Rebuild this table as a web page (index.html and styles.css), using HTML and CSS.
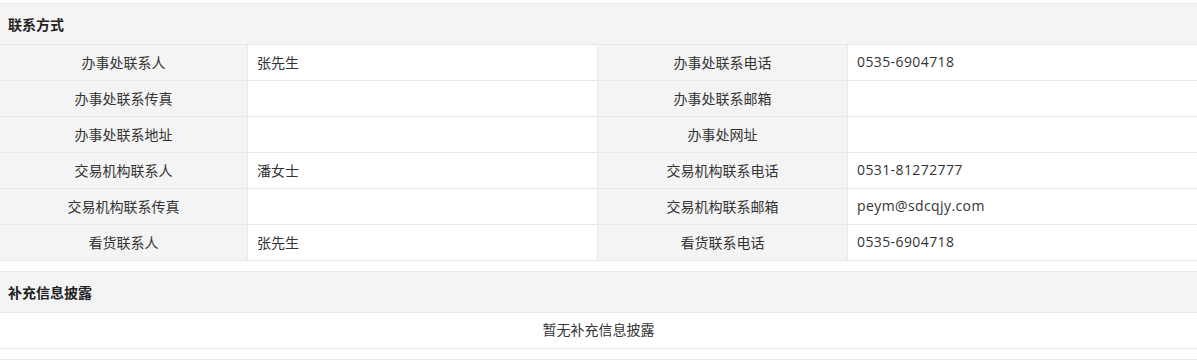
FILE: index.html
```html
<!DOCTYPE html>
<html lang="zh-CN">
<head>
<meta charset="utf-8">
<title>联系方式</title>
<link rel="stylesheet" href="styles.css">
</head>
<body>
<div class="section">
  <div class="sec-title">联系方式</div>
  <div class="grid">
    <div class="cell label">办事处联系人</div>
    <div class="cell value">张先生</div>
    <div class="cell label">办事处联系电话</div>
    <div class="cell value latin">0535-6904718</div>

    <div class="cell label">办事处联系传真</div>
    <div class="cell value"></div>
    <div class="cell label">办事处联系邮箱</div>
    <div class="cell value"></div>

    <div class="cell label">办事处联系地址</div>
    <div class="cell value"></div>
    <div class="cell label">办事处网址</div>
    <div class="cell value"></div>

    <div class="cell label">交易机构联系人</div>
    <div class="cell value">潘女士</div>
    <div class="cell label">交易机构联系电话</div>
    <div class="cell value latin">0531-81272777</div>

    <div class="cell label">交易机构联系传真</div>
    <div class="cell value"></div>
    <div class="cell label">交易机构联系邮箱</div>
    <div class="cell value latin">peym@sdcqjy.com</div>

    <div class="cell label">看货联系人</div>
    <div class="cell value">张先生</div>
    <div class="cell label">看货联系电话</div>
    <div class="cell value latin">0535-6904718</div>
  </div>
</div>
<div class="section">
  <div class="sec-title">补充信息披露</div>
  <div class="empty">暂无补充信息披露</div>
</div>
<div class="section"></div>
</body>
</html>
```
FILE: styles.css
```css
html, body {
  margin: 0;
  padding: 0;
  background: #fff;
}
body {
  font-family: "Open Sans", "Noto Sans CJK SC", sans-serif;
  font-size: 14px;
  color: #333;
  padding-top: 3px;
}
.section {
  border-top: 1px solid #e8e8e8;
  margin-bottom: 10px;
}
.sec-title {
  height: 40px;
  line-height: 40px;
  background: #f4f4f4;
  border-bottom: 1px solid #e8e8e8;
  padding-left: 8px;
  font-weight: bold;
  font-size: 14px;
  color: #222;
  font-family: "Noto Sans CJK SC", sans-serif;
}
.grid {
  display: grid;
  grid-template-columns: 247px 349px 249px 1fr;
  grid-auto-rows: 35px;
  gap: 1px;
  padding-bottom: 1px;
  background: #e8e8e8;
}
.cell {
  display: flex;
  align-items: center;
  background: #fff;
  white-space: nowrap;
  padding-bottom: 2px;
  box-sizing: border-box;
}
.label {
  background: #f4f4f4;
  justify-content: center;
}
.value {
  padding-left: 9px;
}
.latin {
  letter-spacing: 0.4px;
}
.empty {
  height: 35px;
  line-height: 33px;
  text-align: center;
  border-bottom: 1px solid #e8e8e8;
}
```
